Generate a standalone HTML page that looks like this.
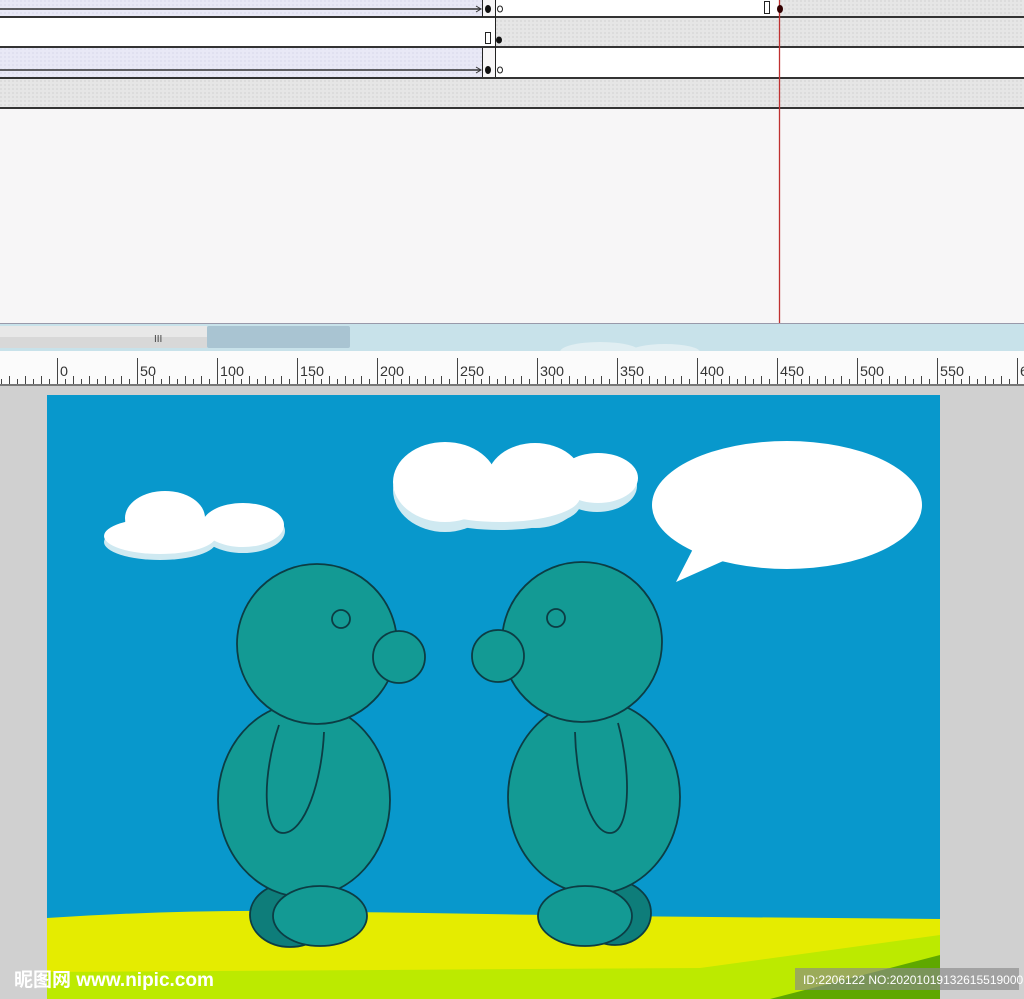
<!DOCTYPE html>
<html><head><meta charset="utf-8"><style>
html,body{margin:0;padding:0;width:1024px;height:999px;overflow:hidden;background:#d0d0d0;font-family:"Liberation Sans","Noto Sans CJK SC",sans-serif}
</style></head><body>
<svg width="1024" height="999" viewBox="0 0 1024 999" xmlns="http://www.w3.org/2000/svg" style="position:absolute;left:0;top:0">
<defs>
<pattern id="hatch" width="4" height="4" patternUnits="userSpaceOnUse"><rect width="4" height="4" fill="#e6e6e6"/><rect width="2" height="2" fill="#dcdcdc"/></pattern>
<pattern id="lav" width="4" height="4" patternUnits="userSpaceOnUse"><rect width="4" height="4" fill="#e8e8f6"/><rect width="2" height="2" fill="#e0e0f0"/></pattern>
</defs>
<rect x="0" y="0" width="1024" height="323" fill="#f7f6f7"/>
<rect x="0" y="0" width="482" height="17" fill="url(#lav)"/>
<rect x="495" y="0" width="285" height="17" fill="#fff"/>
<rect x="780" y="0" width="244" height="17" fill="url(#hatch)"/>
<rect x="0" y="18" width="495" height="29" fill="#fff"/>
<rect x="495" y="18" width="529" height="29" fill="url(#hatch)"/>
<rect x="0" y="48" width="482" height="29" fill="url(#lav)"/>
<rect x="495" y="48" width="529" height="29" fill="#fff"/>
<rect x="0" y="78" width="1024" height="29" fill="url(#hatch)"/>
<g fill="#333">
<rect x="0" y="16" width="1024" height="2"/><rect x="0" y="46" width="1024" height="2"/>
<rect x="0" y="77" width="1024" height="2"/><rect x="0" y="107" width="1024" height="2"/>
</g>
<line x1="0" y1="9" x2="480" y2="9" stroke="#333" stroke-width="1.5"/>
<path d="M476 6 L481 9 L476 12" fill="none" stroke="#333"/>
<line x1="0" y1="70" x2="480" y2="70" stroke="#333" stroke-width="1.5"/>
<path d="M476 67 L481 70 L476 73" fill="none" stroke="#333"/>
<line x1="482.5" y1="0" x2="482.5" y2="17" stroke="#222"/><line x1="495.5" y1="0" x2="495.5" y2="17" stroke="#222"/>
<line x1="482.5" y1="48" x2="482.5" y2="77" stroke="#222"/><line x1="495.5" y1="48" x2="495.5" y2="77" stroke="#222"/>
<line x1="495.5" y1="17" x2="495.5" y2="48" stroke="#222"/>
<ellipse cx="488" cy="9" rx="3" ry="4" fill="#111"/><ellipse cx="500" cy="9" rx="2.5" ry="3" fill="#fff" stroke="#222"/>
<ellipse cx="488" cy="70" rx="3" ry="4" fill="#111"/><ellipse cx="500" cy="70" rx="2.5" ry="3" fill="#fff" stroke="#222"/>
<rect x="485.5" y="32.5" width="5" height="11" fill="#fff" stroke="#222"/><ellipse cx="499" cy="40" rx="3" ry="3.5" fill="#111"/>
<rect x="764.5" y="1.5" width="5" height="12" fill="#fff" stroke="#222"/>
<line x1="779.5" y1="0" x2="779.5" y2="323" stroke="#c03030" stroke-width="1.3"/>
<ellipse cx="780" cy="9" rx="3" ry="4" fill="#300"/>
<rect x="0" y="323" width="1024" height="28" fill="#c8e2ea"/>
<rect x="0" y="323" width="1024" height="1" fill="#99a"/>
<rect x="0" y="326" width="207" height="22" fill="#d8d8d8"/>
<rect x="0" y="326" width="207" height="11" fill="#e8e8e8"/>
<rect x="207" y="326" width="143" height="22" rx="2" fill="#a9c4d2"/>
<text x="154" y="342" font-size="10" fill="#444">III</text>
<ellipse cx="600" cy="352" rx="40" ry="10" fill="#e0eef2"/><ellipse cx="665" cy="352" rx="35" ry="8" fill="#e0eef2"/>
<rect x="0" y="351" width="1024" height="35" fill="#fbfbfb"/>
<rect x="0" y="384" width="1024" height="2" fill="#777"/>
<g stroke="#444" stroke-width="1" id="ticks"></g>
<g font-size="14" fill="#333" font-family="Liberation Sans, sans-serif" id="labels"></g>
<rect x="47" y="395" width="893" height="604" fill="#0898cc"/>
<path d="M47 918 Q200 908 350 912 Q500 914 600 916 L940 919 L940 999 L47 999 Z" fill="#e5ec00"/>
<path d="M47 972 L700 968 L940 935 L940 999 L47 999 Z" fill="#bcea00"/>
<path d="M770 999 L940 955 L940 999 Z" fill="#5fa800"/>
<g fill="#cfe9f1">
<ellipse cx="165" cy="524" rx="40" ry="27"/><ellipse cx="243" cy="531" rx="42" ry="22"/><ellipse cx="160" cy="542" rx="56" ry="18"/>
<ellipse cx="445" cy="490" rx="52" ry="42"/><ellipse cx="535" cy="488" rx="50" ry="40"/><ellipse cx="597" cy="486" rx="40" ry="26"/><ellipse cx="500" cy="505" rx="80" ry="25"/>
</g>
<g fill="#fff">
<ellipse cx="165" cy="518" rx="40" ry="27"/><ellipse cx="243" cy="525" rx="41" ry="22"/><ellipse cx="160" cy="536" rx="56" ry="18"/>
<ellipse cx="445" cy="482" rx="52" ry="40"/><ellipse cx="535" cy="480" rx="48" ry="37"/><ellipse cx="598" cy="478" rx="40" ry="25"/><ellipse cx="500" cy="497" rx="80" ry="25"/>
</g>
<ellipse cx="787" cy="505" rx="135" ry="64" fill="#fff"/>
<path d="M695 545 L676 582 L730 558 Z" fill="#fff"/>
<g stroke="#0c3d44" stroke-width="1.8" fill="#139a94">
<ellipse cx="290" cy="915" rx="40" ry="32" fill="#0e7d7a"/>
<ellipse cx="304" cy="800" rx="86" ry="97"/>
<ellipse cx="320" cy="916" rx="47" ry="30"/>
<circle cx="317" cy="644" r="80"/>
<circle cx="399" cy="657" r="26"/>
<circle cx="341" cy="619" r="9"/>
<path d="M279 725 C262 775 262 833 283 833 C305 833 322 780 324 732" fill="none"/>
<ellipse cx="615" cy="913" rx="36" ry="32" fill="#0e7d7a"/>
<ellipse cx="594" cy="797" rx="86" ry="97"/>
<ellipse cx="585" cy="916" rx="47" ry="30"/>
<circle cx="582" cy="642" r="80"/>
<circle cx="498" cy="656" r="26"/>
<circle cx="556" cy="618" r="9"/>
<path d="M575 732 C576 780 590 833 610 833 C630 833 632 775 618 723" fill="none"/>
</g>
<text x="14" y="986" font-size="19" font-weight="bold" fill="#fff" font-family="Liberation Sans, Noto Sans CJK SC, sans-serif">昵图网 www.nipic.com</text>
<rect x="795" y="968" width="224" height="22" fill="#888" opacity="0.65"/>
<text x="803" y="984" font-size="12" fill="#fff">ID:2206122 NO:20201019132615519000</text>
</svg>
<script>
var g=document.getElementById('ticks'),s='',L=document.getElementById('labels'),t='';
for(var i=-7;i<=120;i++){var x=57+i*8;if(x<0||x>1024)continue;var h=(i%10==0)?26:(i%2==0?8:5);s+='<line x1="'+(x+.5)+'" y1="'+(384-h)+'" x2="'+(x+.5)+'" y2="384"/>';
if(i%10==0){t+='<text x="'+(x+3)+'" y="376" textLength="'+(i==0?8:(i<20?16:24))+'" lengthAdjust="spacingAndGlyphs">'+(i*5)+'</text>';}}
g.innerHTML=s;L.innerHTML=t;
</script>
</body></html>
